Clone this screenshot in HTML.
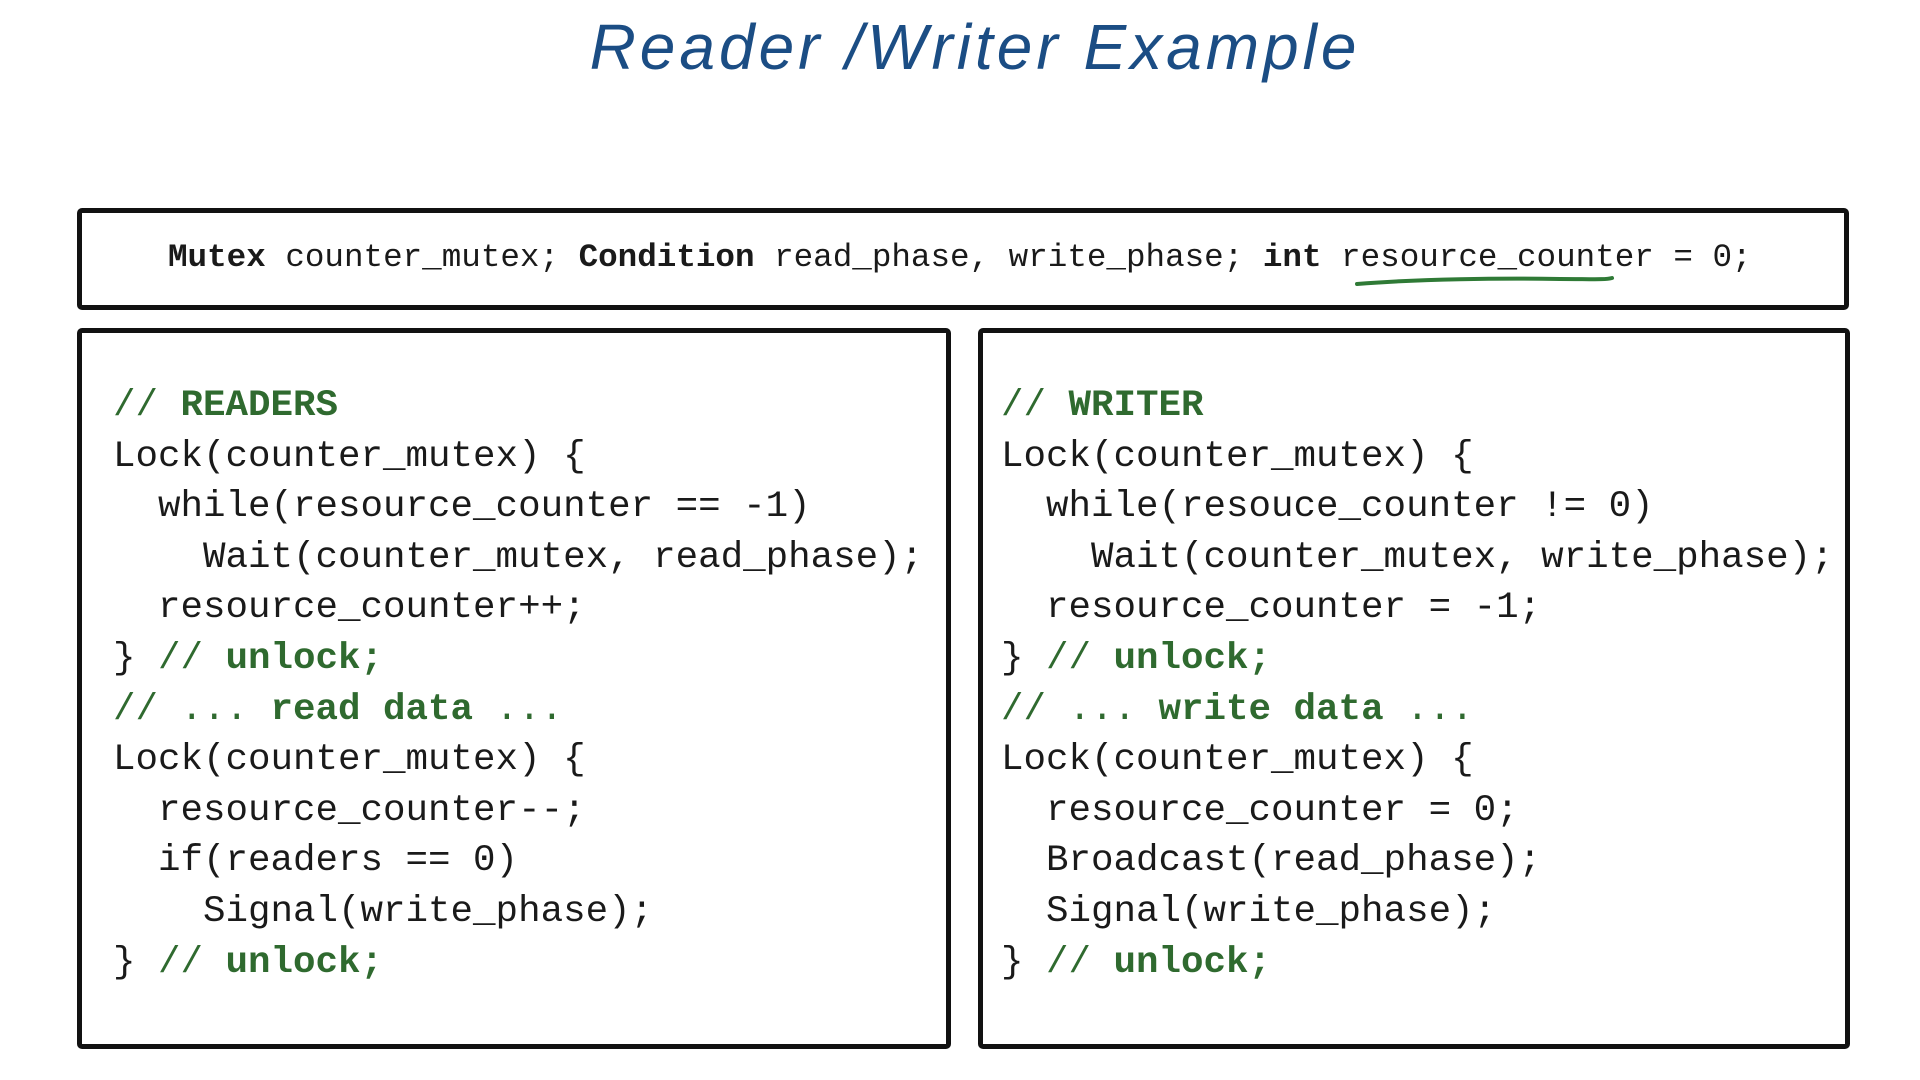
<!DOCTYPE html>
<html><head><meta charset="utf-8"><style>
html,body{margin:0;padding:0;width:1920px;height:1080px;background:#fff;overflow:hidden;position:relative}
.title{position:absolute;left:585px;top:10px;width:780px;text-align:center;font:italic 64px "Liberation Sans",sans-serif;color:#1b4d84;letter-spacing:4px;white-space:nowrap}
.box{position:absolute;border:5px solid #111;border-radius:5px;box-sizing:border-box}
.top{position:absolute;left:168px;top:238px;font:32.6px/40px "Liberation Mono",monospace;color:#1a1a1a;white-space:pre}
pre{position:absolute;margin:0;font:37.5px/50.6px "Liberation Mono",monospace;color:#1a1a1a}
.c{color:#2f6a2f}
b{font-weight:bold}
</style></head><body>
<div class="title">Reader /Writer Example</div>
<div class="box" style="left:77px;top:208px;width:1772px;height:102px"></div>
<div class="top"><b>Mutex</b> counter_mutex; <b>Condition</b> read_phase, write_phase; <b>int</b> resource_counter = 0;</div>
<svg style="position:absolute;left:0;top:0" width="1920" height="1080"><path d="M1357 284 C1420 279 1500 278 1560 279 C1590 279 1605 280 1612 278" stroke="#2f7a36" stroke-width="4" fill="none" stroke-linecap="round"/></svg>
<div class="box" style="left:77px;top:328px;width:874px;height:721px"></div>
<div class="box" style="left:978px;top:328px;width:872px;height:721px"></div>
<pre style="left:113px;top:381px"><span class="c">// <b>READERS</b></span>
Lock(counter_mutex) {
  while(resource_counter == -1)
    Wait(counter_mutex, read_phase);
  resource_counter++;
} <span class="c">// <b>unlock;</b></span>
<span class="c">// ... <b>read data</b> ...</span>
Lock(counter_mutex) {
  resource_counter--;
  if(readers == 0)
    Signal(write_phase);
} <span class="c">// <b>unlock;</b></span></pre>
<pre style="left:1001px;top:381px"><span class="c">// <b>WRITER</b></span>
Lock(counter_mutex) {
  while(resouce_counter != 0)
    Wait(counter_mutex, write_phase);
  resource_counter = -1;
} <span class="c">// <b>unlock;</b></span>
<span class="c">// ... <b>write data</b> ...</span>
Lock(counter_mutex) {
  resource_counter = 0;
  Broadcast(read_phase);
  Signal(write_phase);
} <span class="c">// <b>unlock;</b></span></pre>
</body></html>
